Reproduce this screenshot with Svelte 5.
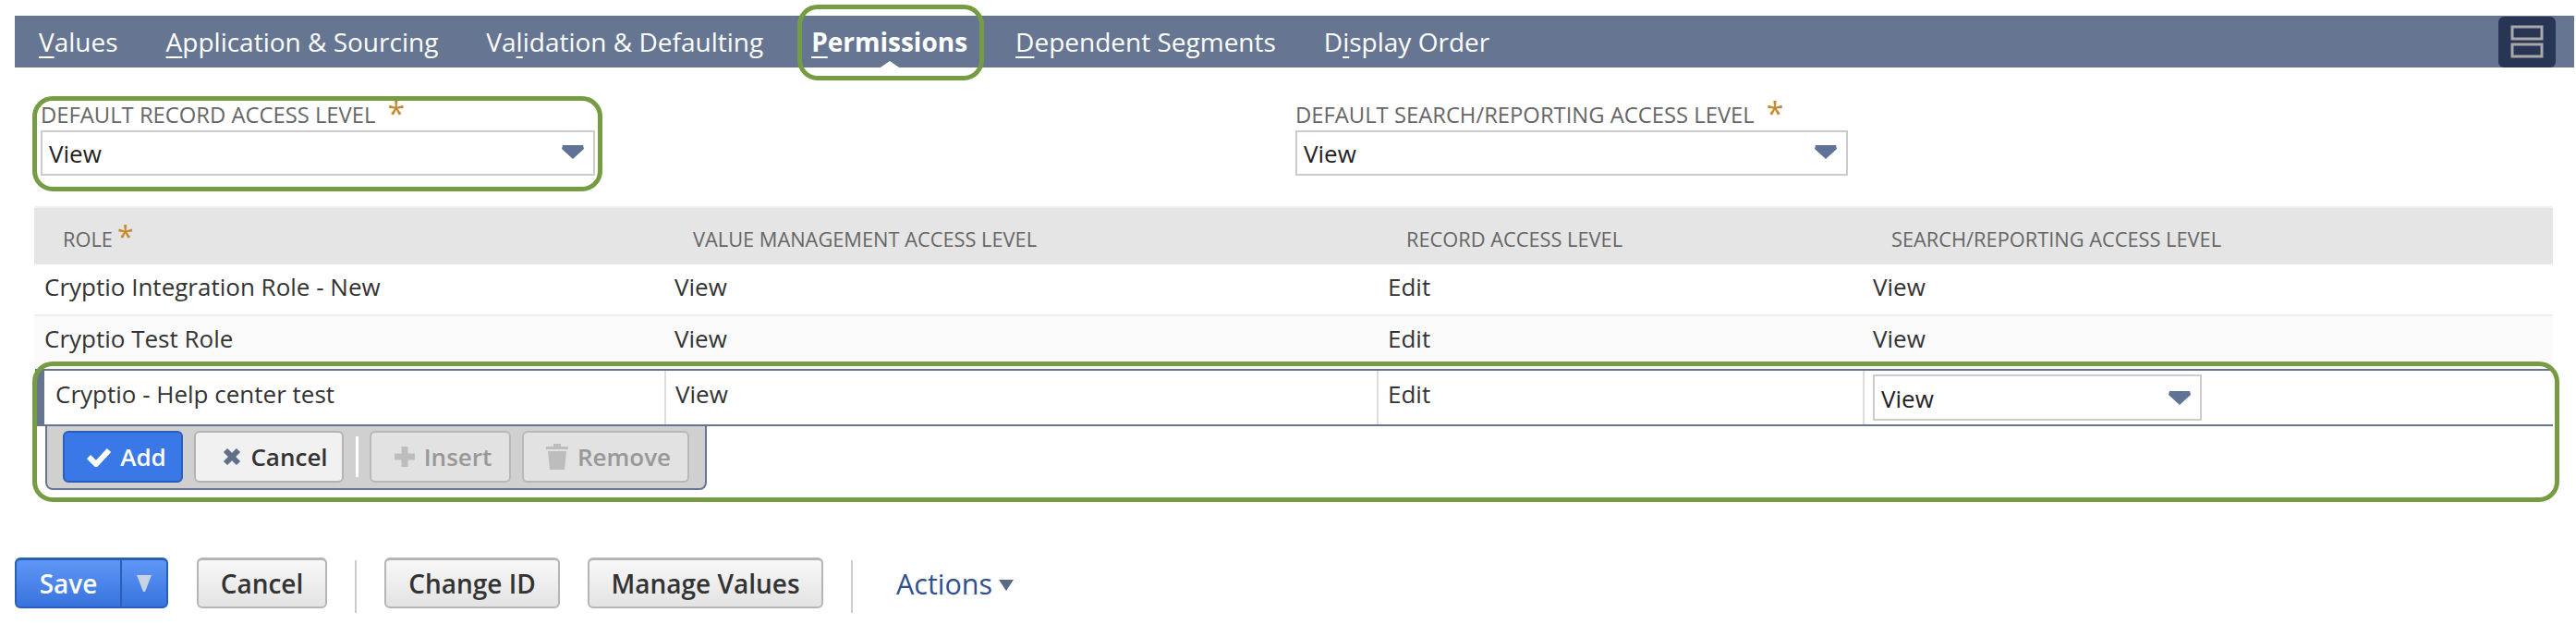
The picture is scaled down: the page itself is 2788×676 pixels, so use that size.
<script>
  const tabs = [
    { pre: '', key: 'V', post: 'alues' },
    { pre: '', key: 'A', post: 'pplication & Sourcing' },
    { pre: 'Va', key: 'l', post: 'idation & Defaulting' },
    { pre: '', key: 'P', post: 'ermissions', active: true },
    { pre: '', key: 'D', post: 'ependent Segments' },
    { pre: 'D', key: 'i', post: 'splay Order' }
  ];

  const fields = ['Default Record Access Level', 'Default Search/Reporting Access Level'];

  const rows = [
    ['Cryptio Integration Role - New', 'View', 'Edit', 'View'],
    ['Cryptio Test Role', 'View', 'Edit', 'View']
  ];
</script>

<div class="page">
  <nav class="tabs">
    {#each tabs as tab}
      <span class="tab" class:active={tab.active}>{tab.pre}<u>{tab.key}</u>{tab.post}</span>
    {/each}
    <button class="layout-btn" aria-label="Layout">
      <svg width="36" height="36" viewBox="0 0 36 36">
        <rect x="2" y="2" width="32" height="13" fill="none" stroke="#a8a8a8" stroke-width="3" />
        <rect x="2" y="21" width="32" height="13" fill="none" stroke="#a8a8a8" stroke-width="3" />
      </svg>
    </button>
  </nav>

  <section class="fields">
    {#each fields as field}
      <div class="field">
        <div class="field-label">{field}<span class="req">*</span></div>
        <div class="select">
          <span>View</span>
          <svg class="caret" width="24" height="16" viewBox="0 0 24 16"><path d="M1 1h22l1 4-12 11L0 5z" fill="#5f7396" /></svg>
        </div>
      </div>
    {/each}
  </section>

  <section class="table">
    <div class="row head">
      <div>Role<span class="req small">*</span></div>
      <div>Value Management Access Level</div>
      <div>Record Access Level</div>
      <div>Search/Reporting Access Level</div>
    </div>
    {#each rows as row}
      <div class="row body">
        {#each row as cell}
          <div>{cell}</div>
        {/each}
      </div>
    {/each}
    <div class="row edit">
      <div>Cryptio - Help center test</div>
      <div>View</div>
      <div>Edit</div>
      <div class="edit-select">
        <div class="select small-select">
          <span>View</span>
          <svg class="caret" width="24" height="16" viewBox="0 0 24 16"><path d="M1 1h22l1 4-12 11L0 5z" fill="#5f7396" /></svg>
        </div>
      </div>
    </div>
    <div class="toolbar">
      <button class="tb add">
        <svg width="26" height="22" viewBox="0 0 26 22"><path d="M2 11l8 8L24 4" fill="none" stroke="#fff" stroke-width="6" /></svg>
        Add
      </button>
      <button class="tb cancel">
        <svg width="20" height="20" viewBox="0 0 20 20"><path d="M3 3l14 14M17 3L3 17" fill="none" stroke="#5f7088" stroke-width="6" /></svg>
        Cancel
      </button>
      <span class="tb-sep"></span>
      <button class="tb off insert">
        <svg width="22" height="22" viewBox="0 0 22 22"><path d="M11 0v22M0 11h22" fill="none" stroke="#bdbdbd" stroke-width="7" /></svg>
        Insert
      </button>
      <button class="tb off remove">
        <svg width="24" height="28" viewBox="0 0 24 28"><path d="M0 3h8V0h8v3h8v3H0zM2 8h20l-2 20H4z" fill="#bdbdbd" /></svg>
        Remove
      </button>
    </div>
  </section>

  <footer class="actions">
    <div class="save">
      <span class="save-main">Save</span>
      <span class="save-arrow">
        <svg width="16" height="18" viewBox="0 0 16 18"><path d="M0 0h16L9 18H7z" fill="#c9d3e6" /></svg>
      </span>
    </div>
    <button class="btn cancel-btn">Cancel</button>
    <span class="divider"></span>
    <button class="btn change">Change ID</button>
    <button class="btn manage">Manage Values</button>
    <span class="divider"></span>
    <span class="more">Actions<svg width="16" height="12" viewBox="0 0 16 12"><path d="M0 0h16L8 12z" fill="#5a6a86" /></svg></span>
  </footer>

  <span class="mark mark-tab"></span>
  <span class="mark mark-field"></span>
  <span class="mark mark-row"></span>
</div>

<style>
  :global(body) { margin: 0; background: #fff; }

  .page {
    position: relative;
    width: 2788px;
    height: 676px;
    overflow: hidden;
    font-family: "Open Sans", "Liberation Sans", sans-serif;
    font-size: 26px;
    color: #333;
  }

  button { font-family: inherit; padding: 0; margin: 0; }

  .tabs {
    display: flex;
    align-items: center;
    gap: 52px;
    height: 56px;
    margin: 17px 2px 0 16px;
    padding-left: 26px;
    background: #667692;
    position: relative;
    font-size: 28px;
  }
  .tab { color: #fff; white-space: nowrap; position: relative; }
  .tab u { text-decoration-thickness: 2px; text-underline-offset: 5px; }
  .tab.active { font-weight: 700; }
  .tab.active::after {
    content: "";
    position: absolute;
    left: 50%;
    bottom: -13px;
    margin-left: -16px;
    border: 16px solid transparent;
    border-top: 0;
    border-bottom: 11px solid #fff;
  }
  .layout-btn {
    margin-left: auto;
    margin-right: 20px;
    width: 62px;
    height: 55px;
    background: #283555;
    border: 0;
    border-radius: 6px;
    display: flex;
    align-items: center;
    justify-content: center;
  }

  .fields {
    display: grid;
    grid-template-columns: 1358px 598px;
    margin: 38px 0 0 44px;
    height: 100px;
  }
  .field-label {
    text-transform: uppercase;
    font-size: 23.8px;
    line-height: 26px;
    margin-bottom: 4px;
    color: #666;
    white-space: nowrap;
  }
  .req { color: #c38a2b; font-size: 34px; line-height: 20px; margin-left: 13px; vertical-align: -2px; }
  .req.small { margin-left: 5px; font-size: 32px; vertical-align: -1px; }
  .select {
    display: flex;
    align-items: center;
    justify-content: space-between;
    box-sizing: border-box;
    height: 49px;
    margin-top: 0;
    padding: 0 10px 0 7px;
    border: 2px solid #ccc;
    background: #fff;
    color: #222;
  }
  .field:first-child .select { width: 600px; }
  .caret { margin-top: -3px; }

  .table {
    margin: 12px 25px 0 37px;
    border-top: 2px solid #f0f0f0;
  }
  .row {
    display: grid;
    grid-template-columns: 682px 772px 525px 1fr;
  }
  .head {
    height: 61px;
    align-items: center;
    background: #e5e5e5;
    color: #666;
    font-size: 21.8px;
    text-transform: uppercase;
  }
  .head > div { padding-left: 31px; padding-top: 6px; white-space: nowrap; }
  .body { height: 54px; align-items: center; border-bottom: 2px solid #eee; }
  .body:nth-child(3) { height: 57px; background: #fafafa; border-bottom: 0; }
  .body > div { padding-left: 11px; padding-bottom: 6px; }
  .body:nth-child(3) > div { padding-bottom: 10px; }

  .edit {
    height: 62px;
    box-sizing: border-box;
    border-top: 2px solid #66758f;
    border-bottom: 2px solid #66758f;
    border-left: 10px solid #66758f;
    grid-template-columns: 671px 771px 526px 1fr;
    position: relative;
    margin-left: 1px;
  }
  .edit > div { padding: 7px 0 0 10px; border-left: 2px solid #ddd; }
  .edit > div:first-child { border-left: 0; padding-left: 12px; }
  .edit > .edit-select { padding: 4px 0 0 9px; }
  .small-select { width: 356px; height: 50px; padding-left: 7px; padding-top: 2px; }

  .toolbar {
    display: flex;
    align-items: center;
    box-sizing: border-box;
    width: 716px;
    height: 70px;
    margin: -1px 0 0 12px;
    padding: 0 0 0 17px;
    background: #d0d0d0;
    border: 2px solid #66758f;
    border-top: 0;
    border-radius: 0 0 8px 8px;
    gap: 12px;
  }
  .tb {
    display: flex;
    align-items: center;
    justify-content: center;
    gap: 10px;
    box-sizing: border-box;
    height: 56px;
    border-radius: 6px;
    font-size: 26px;
    font-weight: 600;
    border: 2px solid #b3b3b3;
    background: #f1f1f1;
    color: #333;
  }
  .add { width: 130px; padding-left: 8px; background: #3b78e7; border-color: #2a5fb8; color: #fff; }
  .cancel { width: 162px; padding-left: 14px; }
  .tb-sep { width: 3px; height: 44px; background: #fff; margin: 0 0 0 1px; }
  .off { background: #e2e2e2; color: #989898; border-color: #b8b8b8; }
  .insert { width: 153px; padding-left: 6px; }
  .remove { width: 181px; padding-left: 6px; }

  .actions {
    display: flex;
    align-items: flex-start;
    margin: 73px 0 0 16px;
    font-weight: 600;
    font-size: 28px;
  }
  .save {
    display: flex;
    box-sizing: border-box;
    width: 166px;
    height: 55px;
    border: 2px solid #2a5fb8;
    border-top-width: 3px;
    border-radius: 6px;
    background: linear-gradient(#5f97f5, #3873dd);
    color: #fff;
  }
  .save-main { width: 112px; display: flex; align-items: center; justify-content: center; }
  .save-arrow {
    flex: 1;
    display: flex;
    align-items: center;
    justify-content: center;
    border-left: 2px solid #2a5fb8;
  }
  .btn {
    box-sizing: border-box;
    height: 55px;
    border: 2px solid #b5b5b5;
    border-top-width: 3px;
    border-radius: 6px;
    background: linear-gradient(#f8f8f8, #e3e3e3);
    color: #333;
    font-size: 28px;
    font-weight: 600;
  }
  .cancel-btn { width: 141px; margin-left: 31px; }
  .change { width: 190px; }
  .manage { width: 255px; margin-left: 30px; }
  .divider { width: 2px; height: 57px; margin: 3px 30px 0; background: #ccc; }
  .more {
    display: flex;
    align-items: center;
    gap: 7px;
    height: 55px;
    margin-left: 17px;
    color: #2f4f8f;
    font-size: 30.5px;
    font-weight: 400;
  }
  .more svg { margin-top: 4px; }

  .mark {
    position: absolute;
    box-sizing: border-box;
    border: 5px solid #769c43;
    border-radius: 22px;
    pointer-events: none;
  }
  .mark-tab { left: 863px; top: 5px; width: 202px; height: 82px; }
  .mark-field { left: 35px; top: 104px; width: 617px; height: 103px; }
  .mark-row { left: 35px; top: 391px; width: 2735px; height: 152px; }
</style>
